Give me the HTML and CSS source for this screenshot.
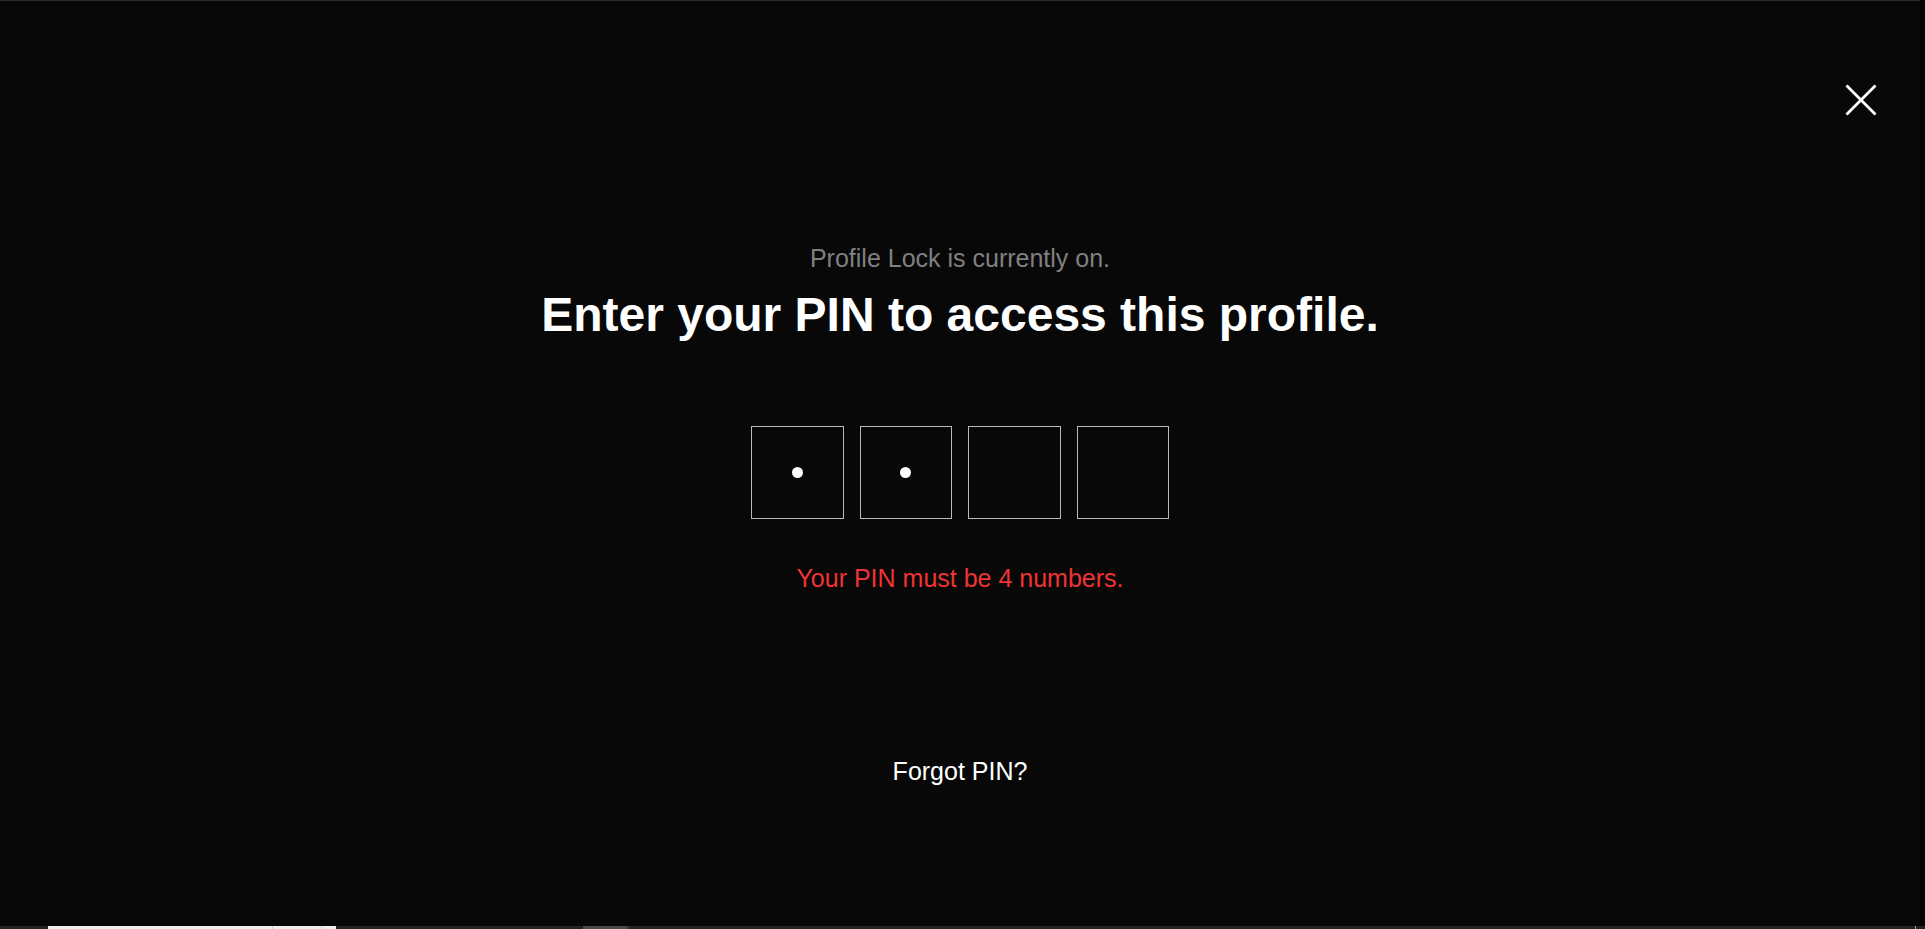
FILE: index.html
```html
<!DOCTYPE html>
<html lang="en">
<head>
<meta charset="utf-8">
<title>Profile Lock</title>
<link rel="stylesheet" href="styles.css">
</head>
<body>
<div class="screen">
  <main class="gate">
    <button class="close" aria-label="Close">
      <svg width="32" height="32" viewBox="0 0 32 32"><path d="M1.5 1.5 L30.5 30.5 M30.5 1.5 L1.5 30.5" stroke="#fff" stroke-width="2.8" fill="none"/></svg>
    </button>
    <div class="content">
      <p class="status">Profile Lock is currently on.</p>
      <h1 class="title">Enter your PIN to access this profile.</h1>
      <div class="pins">
        <div class="pin"><span class="dot"></span></div>
        <div class="pin"><span class="dot"></span></div>
        <div class="pin"></div>
        <div class="pin"></div>
      </div>
      <p class="error">Your PIN must be 4 numbers.</p>
      <a class="forgot" href="#">Forgot PIN?</a>
    </div>
  </main>
  <div class="taskbar">
    <span class="tb-white"><span class="tb-mark m1"></span><span class="tb-mark m2"></span></span>
    <span class="tb-grey"></span>
    <span class="tb-dark"></span>
    <span class="tb-end"></span>
  </div>
</div>
</body>
</html>
```
FILE: styles.css
```css
html, body {
  margin: 0;
  padding: 0;
  background: #020202;
  font-family: "Liberation Sans", Arial, sans-serif;
}
.screen {
  width: 1925px;
  height: 929px;
  display: flex;
  flex-direction: column;
  overflow: hidden;
}
.gate {
  position: relative;
  box-sizing: border-box;
  width: 1920px;
  height: 926px;
  background: #080808;
  border-top: 1px solid #2b2b2b;
}
.close {
  position: absolute;
  left: 1845px;
  top: 83px;
  width: 32px;
  height: 32px;
  padding: 0;
  border: 0;
  background: transparent;
  cursor: pointer;
}
.close svg { display: block; }
.content {
  display: flex;
  flex-direction: column;
  align-items: center;
  padding-top: 243px;
}
.status {
  margin: 0;
  font-size: 25px;
  line-height: 28px;
  color: #808080;
}
.title {
  margin: 15px 0 0;
  font-size: 48px;
  line-height: 56px;
  font-weight: bold;
  color: #fff;
}
.pins {
  display: flex;
  gap: 16px;
  margin-top: 83px;
}
.pin {
  box-sizing: border-box;
  width: 92.5px;
  height: 92.5px;
  border: 1px solid #b8b8b8;
  display: flex;
  align-items: center;
  justify-content: center;
}
.dot {
  width: 11px;
  height: 11px;
  border-radius: 50%;
  background: #fff;
}
.error {
  margin: 45px 0 0;
  font-size: 25px;
  line-height: 28px;
  color: #f03333;
}
.forgot {
  margin-top: 165px;
  font-size: 25px;
  line-height: 28px;
  color: #fff;
  text-decoration: none;
}
.taskbar {
  height: 3px;
  width: 1925px;
  background: #222;
  display: flex;
  align-items: stretch;
}
.tb-white {
  position: relative;
  margin-left: 48px;
  width: 288px;
  background: #efefef;
}
.tb-mark {
  position: absolute;
  top: 0;
  width: 1px;
  height: 3px;
  background: #f0d090;
}
.m1 { left: 224px; }
.m2 { left: 273px; }
.tb-grey {
  margin-left: 247px;
  width: 44px;
  background: #4a4a4a;
}
.tb-dark {
  width: 3px;
  background: #333;
}
.tb-end {
  margin-left: auto;
  margin-right: 9px;
  width: 1px;
  background: #9a9a9a;
}
```
